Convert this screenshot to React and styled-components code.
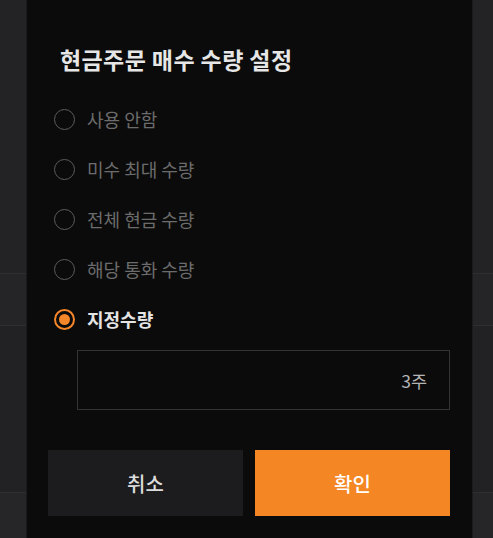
import React, { useState } from "react";
import styled, { createGlobalStyle } from "styled-components";

const GlobalStyle = createGlobalStyle`
  html, body {
    margin: 0;
    padding: 0;
    background: #232325;
    font-family: "Noto Sans CJK KR", "Noto Sans", sans-serif;
  }
`;

const options = [
  "사용 안함",
  "미수 최대 수량",
  "전체 현금 수량",
  "해당 통화 수량",
  "지정수량",
];

const Page = styled.div`
  position: relative;
  width: 493px;
  height: 538px;
  overflow: hidden;
  background: #232325;
`;

const BackRow = styled.div`
  height: ${({ h }) => h}px;
  background: ${({ bg }) => bg};
  border-top: ${({ line }) => (line ? "1px solid #2e2e31" : "none")};
  box-sizing: border-box;
`;

const Modal = styled.div`
  position: absolute;
  top: 0;
  bottom: -20px;
  left: 27px;
  width: 445px;
  box-sizing: border-box;
  padding: 45px 22px 0 21px;
  background: #0b0b0b;
  box-shadow: -1px 0 0 #1b1b1d, 1px 0 0 #1b1b1d;
  display: flex;
  flex-direction: column;
`;

const Title = styled.h2`
  margin: 0 0 20px 12px;
  font-size: 23px;
  line-height: 29px;
  font-weight: 700;
  color: #e6e6e6;
  letter-spacing: 0.4px;
`;

const OptionList = styled.div`
  display: flex;
  flex-direction: column;
`;

const OptionRow = styled.label`
  display: flex;
  align-items: center;
  gap: 12px;
  height: 50px;
  padding-left: 6px;
  cursor: pointer;
`;

const Radio = styled.span`
  box-sizing: border-box;
  width: 21px;
  height: 21px;
  border-radius: 50%;
  border: ${({ checked }) => (checked ? "2px solid #f5862a" : "1.5px solid #5c5c5c")};
  display: flex;
  align-items: center;
  justify-content: center;

  &::after {
    content: "";
    width: 11px;
    height: 11px;
    border-radius: 50%;
    background: #f5862a;
    display: ${({ checked }) => (checked ? "block" : "none")};
  }
`;

const OptionText = styled.span`
  font-size: 18px;
  font-weight: ${({ checked }) => (checked ? 700 : 400)};
  color: ${({ checked }) => (checked ? "#e4e4e4" : "#6c6c6c")};
`;

const AmountBox = styled.div`
  margin: 6px 0 0 29px;
  height: 60px;
  box-sizing: border-box;
  border: 1px solid #333335;
  display: flex;
  align-items: center;
  justify-content: flex-end;
  padding-right: 22px;
  font-size: 17.5px;
  color: #b4b4b4;
`;

const Buttons = styled.div`
  margin-top: 40px;
  display: grid;
  grid-template-columns: 1fr 1fr;
  gap: 12px;
`;

const Button = styled.button`
  height: 66px;
  border: none;
  font-family: inherit;
  font-size: 20px;
  font-weight: 500;
  background: ${({ primary }) => (primary ? "#f48623" : "#1c1c1e")};
  color: ${({ primary }) => (primary ? "#ffffff" : "#dcdcdc")};
  cursor: pointer;
`;

export default function App() {
  const [selected, setSelected] = useState(4);

  return (
    <>
      <GlobalStyle />
      <Page>
        <BackRow h={273} bg="#232325" />
        <BackRow h={52} bg="#252527" line />
        <BackRow h={167} bg="#222224" line />
        <BackRow h={46} bg="#262628" line />
        <Modal>
          <Title>현금주문 매수 수량 설정</Title>
          <OptionList>
            {options.map((label, i) => (
              <OptionRow key={label} onClick={() => setSelected(i)}>
                <Radio checked={i === selected} />
                <OptionText checked={i === selected}>{label}</OptionText>
              </OptionRow>
            ))}
          </OptionList>
          <AmountBox>3주</AmountBox>
          <Buttons>
            <Button>취소</Button>
            <Button primary>확인</Button>
          </Buttons>
        </Modal>
      </Page>
    </>
  );
}
